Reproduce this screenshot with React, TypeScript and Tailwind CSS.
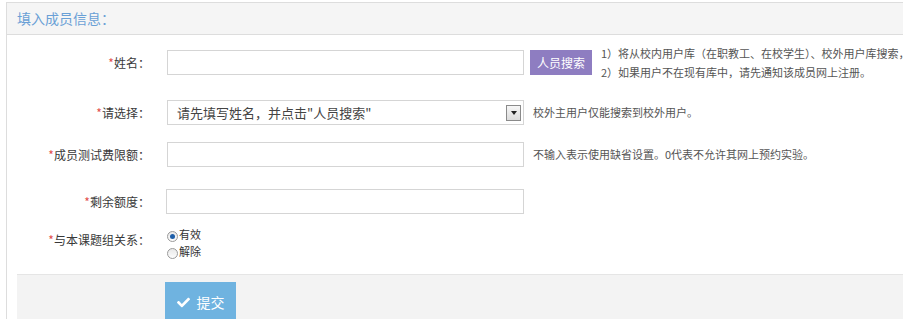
import { FaCheck } from "react-icons/fa";

const font = { fontFamily: '"Noto Sans CJK SC", "Liberation Sans", sans-serif' };

function Label({ text }: { text: string }) {
  return (
    <div className="w-[133px] shrink-0 text-right text-[12px] text-[#393939] leading-[17px]">
      <span className="text-[#e2504b]">*</span>
      {text}：
    </div>
  );
}

function Radio({ checked, label }: { checked?: boolean; label: string }) {
  return (
    <label className="flex items-center h-[17px] text-[11px] text-[#333]">
      <span className="w-[11px] h-[11px] rounded-full border border-[#9a9a9a] bg-gradient-to-b from-[#e8e8e8] to-[#fdfdfd] flex items-center justify-center mt-[3px]">
        {checked && <span className="w-[5px] h-[5px] rounded-full bg-[#1f5fa8]" />}
      </span>
      <span className="ml-[1px]">{label}</span>
    </label>
  );
}

export default function App() {
  return (
    <div className="w-[903px] h-[319px] overflow-hidden bg-white pt-[2px] pl-[6px]" style={font}>
      <div className="border-l border-t border-[#dddddd] h-full">
        <div className="h-[32px] bg-[#f5f5f5] border-b border-[#dddddd] pl-[10px] flex items-center text-[14px] text-[#6aa0d6]">
          填入成员信息：
        </div>

        <div className="pl-[10px] flex flex-col">
          <div className="flex items-center h-[25px] mt-[15px]">
            <Label text="姓名" />
            <input className="shrink-0 ml-[17px] w-[357px] h-[25px] border border-[#d5d5d5] outline-none" />
            <button className="shrink-0 ml-[6px] w-[62px] h-[25px] bg-[#8e7dc1] text-white text-[12px]">人员搜索</button>
            <div className="shrink-0 ml-[9px] text-[11px] text-[#555] leading-[19px] whitespace-nowrap">
              <div>1）将从校内用户库（在职教工、在校学生）、校外用户库搜索，</div>
              <div>2）如果用户不在现有库中，请先通知该成员网上注册。</div>
            </div>
          </div>

          <div className="flex items-center h-[25px] mt-[25px]">
            <Label text="请选择" />
            <div className="shrink-0 ml-[17px] w-[357px] h-[25px] border border-[#d5d5d5] flex items-center pl-[9px] pr-[2px]">
              <span className="flex-1 text-[13px] text-[#444]">请先填写姓名，并点击"人员搜索"</span>
              <span className="w-[15px] h-[16px] border border-[#8a8a8a] bg-gradient-to-b from-[#f6f6f6] to-[#dcdcdc] flex items-center justify-center">
                <span className="w-0 h-0 border-l-[3px] border-r-[3px] border-t-[4px] border-l-transparent border-r-transparent border-t-[#222]" />
              </span>
            </div>
            <span className="shrink-0 ml-[9px] text-[11px] text-[#555]">校外主用户仅能搜索到校外用户。</span>
          </div>

          <div className="flex items-center h-[25px] mt-[17px]">
            <Label text="成员测试费限额" />
            <input className="shrink-0 ml-[17px] w-[357px] h-[25px] border border-[#d5d5d5] outline-none" />
            <span className="shrink-0 ml-[9px] text-[11px] text-[#555]">不输入表示使用缺省设置。0代表不允许其网上预约实验。</span>
          </div>

          <div className="flex items-center h-[25px] mt-[22px]">
            <Label text="剩余额度" />
            <input className="shrink-0 ml-[16px] w-[358px] h-[25px] border border-[#d5d5d5] outline-none" />
          </div>

          <div className="flex items-start mt-[12px]">
            <div className="pt-[5px]">
              <Label text="与本课题组关系" />
            </div>
            <div className="ml-[17px] flex flex-col">
              <Radio checked label="有效" />
              <Radio label="解除" />
            </div>
          </div>

          <div className="mt-[14px] bg-[#f3f3f3] border-t border-[#e5e5e5] pl-[148px] pt-[7px] h-[60px]">
            <button className="w-[71px] h-[40px] bg-[#6fb3e0] text-white text-[14px] flex items-center justify-center gap-[7px]">
              <FaCheck className="w-[13px] h-[13px]" />
              提交
            </button>
          </div>
        </div>
      </div>
    </div>
  );
}
